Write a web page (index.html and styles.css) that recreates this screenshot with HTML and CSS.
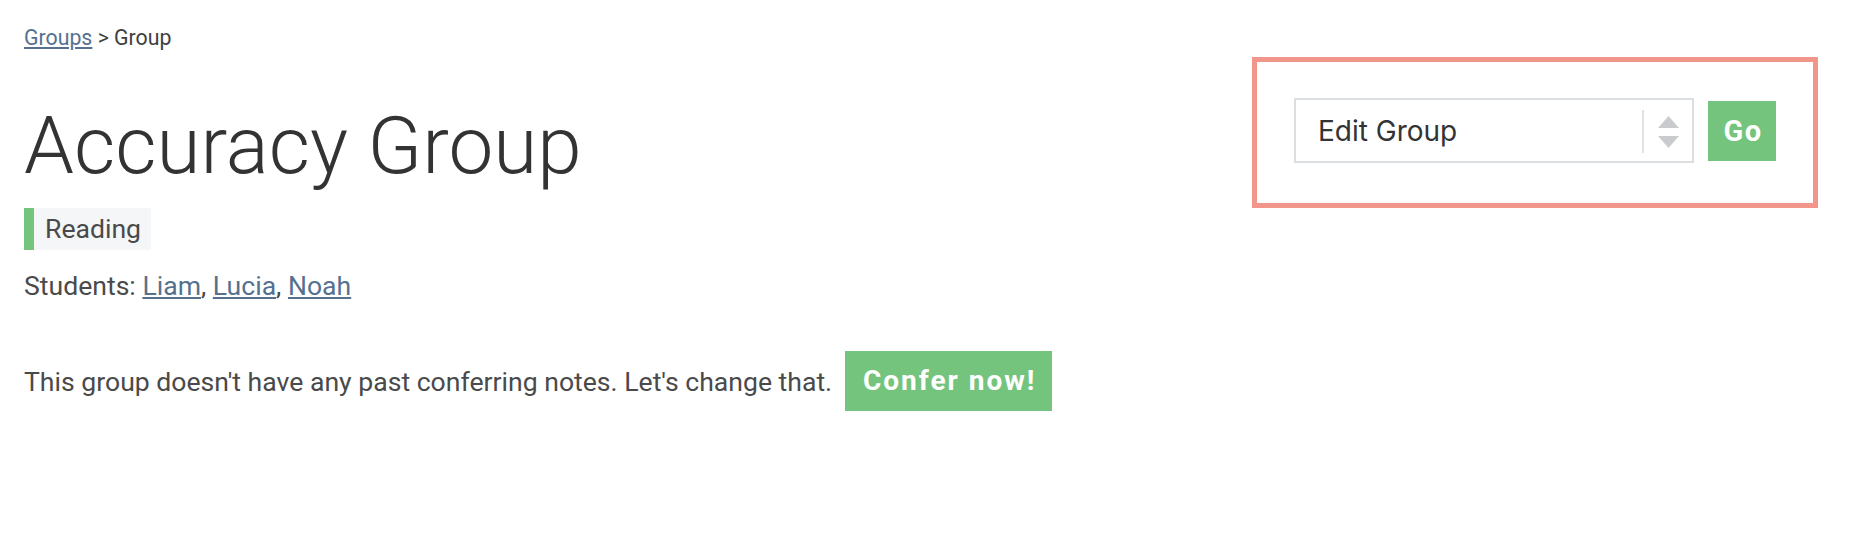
FILE: index.html
```html
<!DOCTYPE html>
<html lang="en">
<head>
    <meta charset="UTF-8">
    <meta name="viewport" content="width=device-width, initial-scale=1.0">
    <title>Accuracy Group</title>
    <link rel="stylesheet" href="styles.css">
</head>
<body>

    <div class="page">
        <!-- Top row: group info on the left, actions on the right -->
        <div class="header">
            <div class="info">
                <div class="breadcrumb"><a href="#">Groups</a> &gt; Group</div>

                <h1>Accuracy Group</h1>

                <span class="subject">Reading</span>

                <p class="students">Students: <a href="#">Liam</a>, <a href="#">Lucia</a>, <a href="#">Noah</a></p>
            </div>

            <form class="actions">
                <div class="select-wrap">
                    <select class="select">
                        <option>Edit Group</option>
                        <option>Delete Group</option>
                    </select>
                    <svg class="select-arrows" width="52" height="61" viewBox="0 0 52 61">
                        <rect x="2" y="10" width="2" height="43" fill="#dfe1e4"/>
                        <polygon points="18,28 39,28 28.5,16" fill="#c9cbce"/>
                        <polygon points="18,36 39,36 28.5,48" fill="#c9cbce"/>
                    </svg>
                </div>
                <button type="button" class="btn btn-go">Go</button>
            </form>
        </div>

        <!-- Conferring notes -->
        <div class="notes">
            <span>This group doesn't have any past conferring notes. Let's change that.</span>
            <a href="#" class="btn btn-confer">Confer now!</a>
        </div>
    </div>

</body>
</html>
```

FILE: styles.css
```css
body {
    margin: 0;
    font-family: Roboto, "Liberation Sans", sans-serif;
    font-size: 26.6px;
    color: #4a4a4a;
    background: #fff;
}

a {
    color: #56718f;
}

.page {
    padding: 25px 32px 0 24px;
}

/* Header row */
.header {
    display: flex;
    justify-content: space-between;
    align-items: flex-start;
}

.breadcrumb {
    font-size: 21.3px;
    line-height: 25px;
    color: #404040;
}

h1 {
    margin: 52px 0 0;
    font-size: 80px;
    font-weight: 300;
    line-height: 88px;
    color: #333;
}

.subject {
    display: inline-block;
    margin-top: 18px;
    padding: 0 10px 0 11px;
    line-height: 42px;
    background: #f5f6f8;
    border-left: 10px solid #74c47e;
}

.students {
    margin: 16px 0 0;
    line-height: 39px;
}

/* Action box on the right */
.actions {
    margin: 32px 0 0;
    padding: 36px 37px 40px;
    border: 5px solid #f2958a;
    display: flex;
    align-items: center;
    gap: 14px;
}

.select-wrap {
    position: relative;
    width: 400px;
    height: 65px;
}

.select {
    appearance: none;
    -webkit-appearance: none;
    box-sizing: border-box;
    width: 100%;
    height: 100%;
    margin: 0;
    padding: 0 60px 0 22px;
    border: 2px solid #dcdfe2;
    border-radius: 0;
    background: #fff;
    font-family: Inter, "Liberation Sans", sans-serif;
    font-size: 28px;
    color: #333;
}

.select-arrows {
    position: absolute;
    top: 2px;
    right: 2px;
    pointer-events: none;
}

.btn {
    display: inline-block;
    box-sizing: border-box;
    height: 60px;
    line-height: 60px;
    padding: 0 0 0 2px;
    border: none;
    background: #74c47e;
    color: #fff;
    font-family: Roboto, "Liberation Sans", sans-serif;
    font-size: 28px;
    font-weight: 700;
    letter-spacing: 2px;
    text-align: center;
    text-decoration: none;
}

.btn-go {
    width: 68px;
    font-size: 29px;
    letter-spacing: 1.5px;
}

/* Notes line */
.notes {
    margin-top: 46px;
    display: flex;
    align-items: center;
    gap: 13px;
}

.btn-confer {
    width: 207px;
}
```
